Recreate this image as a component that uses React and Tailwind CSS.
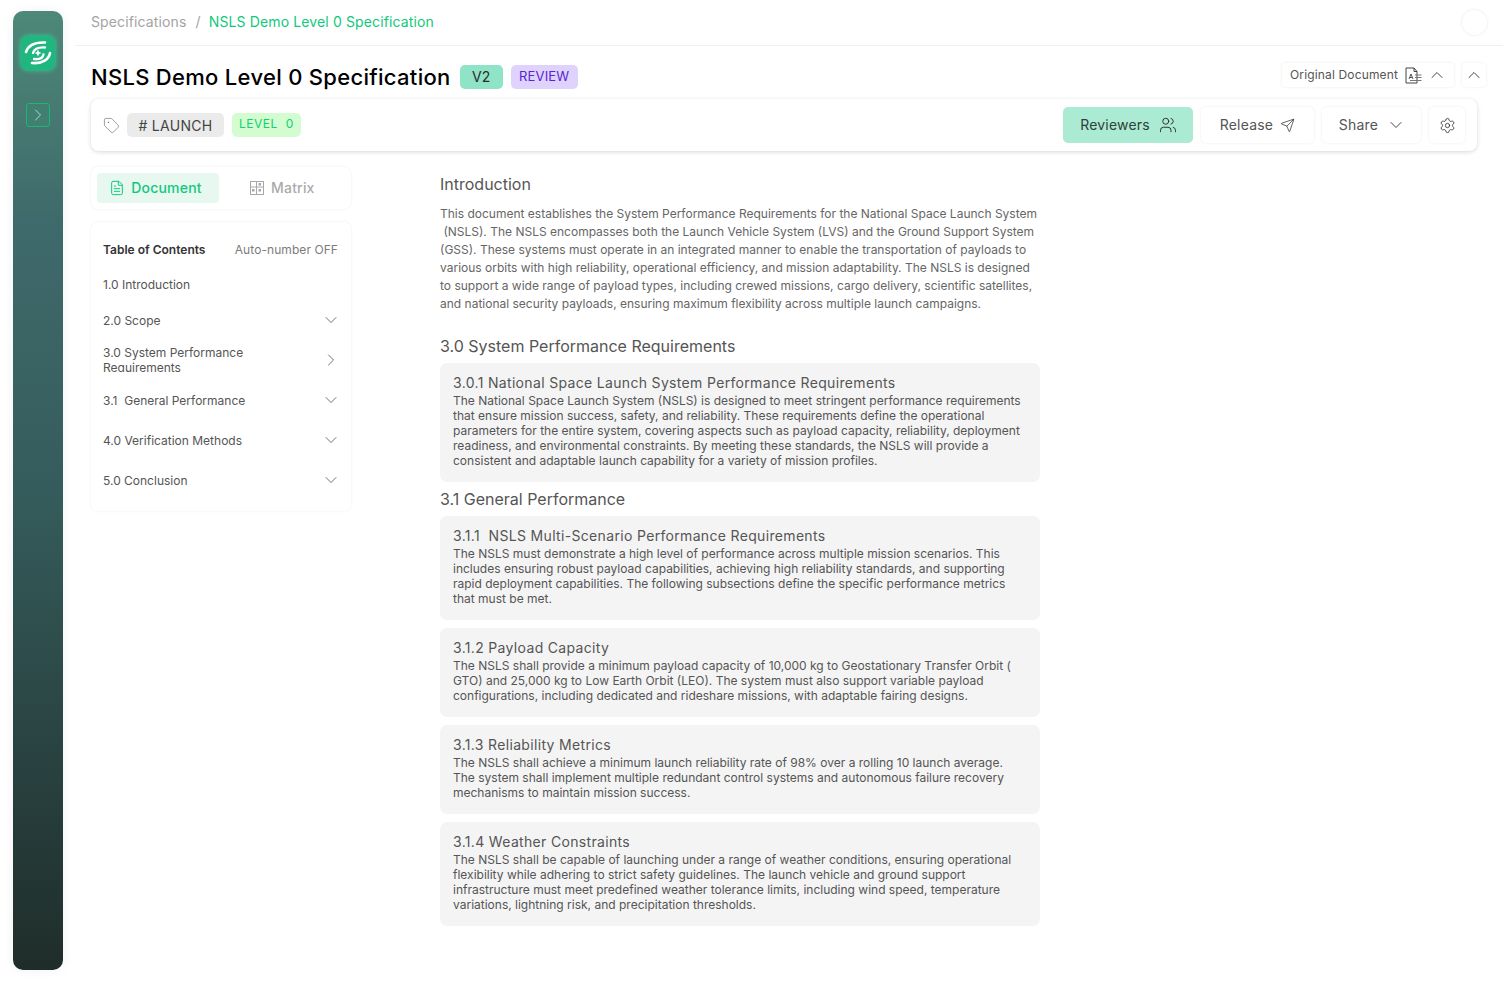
import { ChevronDown, ChevronRight, ChevronUp, Tag, Users, Send, Settings, FileText } from "lucide-react";

const tocItems = [
  { label: "2.0 Scope" },
  { label: "3.0 System Performance Requirements", open: true },
  { label: "3.1  General Performance" },
  { label: "4.0 Verification Methods" },
  { label: "5.0 Conclusion" },
];

const sections = [
  {
    title: "3.1.1  NSLS Multi-Scenario Performance Requirements",
    lines: [
      "The NSLS must demonstrate a high level of performance across multiple mission scenarios. This",
      "includes ensuring robust payload capabilities, achieving high reliability standards, and supporting",
      "rapid deployment capabilities. The following subsections define the specific performance metrics",
      "that must be met.",
    ],
  },
  {
    title: "3.1.2 Payload Capacity",
    lines: [
      "The NSLS shall provide a minimum payload capacity of 10,000 kg to Geostationary Transfer Orbit (",
      "GTO) and 25,000 kg to Low Earth Orbit (LEO). The system must also support variable payload",
      "configurations, including dedicated and rideshare missions, with adaptable fairing designs.",
    ],
  },
  {
    title: "3.1.3 Reliability Metrics",
    lines: [
      "The NSLS shall achieve a minimum launch reliability rate of 98% over a rolling 10 launch average.",
      "The system shall implement multiple redundant control systems and autonomous failure recovery",
      "mechanisms to maintain mission success.",
    ],
  },
  {
    title: "3.1.4 Weather Constraints",
    lines: [
      "The NSLS shall be capable of launching under a range of weather conditions, ensuring operational",
      "flexibility while adhering to strict safety guidelines. The launch vehicle and ground support",
      "infrastructure must meet predefined weather tolerance limits, including wind speed, temperature",
      "variations, lightning risk, and precipitation thresholds.",
    ],
  },
];

const introLines = [
  "This document establishes the System Performance Requirements for the National Space Launch System",
  "\u00a0(NSLS). The NSLS encompasses both the Launch Vehicle System (LVS) and the Ground Support System",
  "(GSS). These systems must operate in an integrated manner to enable the transportation of payloads to",
  "various orbits with high reliability, operational efficiency, and mission adaptability. The NSLS is designed",
  "to support a wide range of payload types, including crewed missions, cargo delivery, scientific satellites,",
  "and national security payloads, ensuring maximum flexibility across multiple launch campaigns.",
];

const Logo = () => (
  <svg width="28" height="28" viewBox="0 0 28 28" fill="none" stroke="white" strokeLinecap="round">
    <path d="M2 13C4 7 10 3 21 3.5" strokeWidth="2.6" />
    <path d="M9 14C10 10.5 14 8 21 8.5" strokeWidth="2.3" />
    <path d="M26 14C25 20 19 25 8 24" strokeWidth="2.6" />
    <path d="M19.5 15.5C19 19 15 20.5 10 20" strokeWidth="2.3" />
    <path d="M14 10.5L15.1 13L17.5 14L15.1 15L14 17.5L12.9 15L10.5 14L12.9 13Z" fill="white" stroke="none" />
  </svg>
);

const MatrixIcon = () => (
  <svg width="14" height="14" viewBox="0 0 14 14" fill="none" stroke="#a8a8a8" strokeWidth="1">
    <rect x="0.5" y="0.5" width="13" height="13" />
    <path d="M0.5 6H13.5M6.5 0.5V13.5" />
    <rect x="2.5" y="8.5" width="1.5" height="1.5" fill="#a8a8a8" />
    <rect x="9" y="8.5" width="1.5" height="1.5" fill="#a8a8a8" />
    <rect x="9" y="2.5" width="1.5" height="1.5" fill="#a8a8a8" />
  </svg>
);

const OriginalDocIcon = () => (
  <svg width="17" height="17" viewBox="0 0 17 17" fill="none" stroke="#444" strokeWidth="1">
    <path d="M1 1H9L12 4.5V16H1Z" />
    <path d="M9 1V4.5H12" />
    <path d="M4 12L6 7L8 12M4.8 10.5H7.2" strokeWidth="0.9" />
    <path d="M10 8H16.5M10 10.5H16.5M5 13.5H16.5" stroke="#777" />
  </svg>
);

export default function App() {
  return (
    <div className="flex min-h-[982px] bg-white font-['Inter',sans-serif] text-[#1a1a1a]">
      {/* Sidebar */}
      <aside className="mt-[11px] ml-[13px] flex h-[959px] w-[50px] shrink-0 flex-col items-center rounded-[10px] bg-[linear-gradient(180deg,#4d8878_0%,#3f6a6b_22%,#355c5c_50%,#1f2d2a_100%)] pt-[25px] shadow-[0_0_12px_rgba(0,0,0,0.06)]">
        <div className="flex h-[34px] w-[34px] items-center justify-center rounded-[7px] bg-[#1fb67f] shadow-[0_0_5px_#2fdc9a]">
          <Logo />
        </div>
        <div className="mt-[33px] flex h-[24px] w-[24px] items-center justify-center rounded-[3px] border border-[#18b878] bg-[#3f8070]">
          <ChevronRight size={20} strokeWidth={1.1} className="text-[#c5dcd6]" />
        </div>
      </aside>

      <main className="ml-[12px] w-[1428px]">
        {/* Breadcrumb */}
        <div className="flex h-[46px] items-center justify-between border-b border-[#f0f0f0] pr-[16px] pl-[16px]">
          <div className="flex items-center pb-[2px] text-[14px] tracking-[0.13px]">
            <span className="text-[#a3a3a3]">Specifications</span>
            <span className="mr-[8px] ml-[9px] text-[#a3a3a3]">/</span>
            <span className="text-[#10c97c]">NSLS Demo Level 0 Specification</span>
          </div>
          <div className="h-[25px] w-[25px] rounded-full bg-white shadow-[0_0_3px_rgba(0,0,0,0.1)]" />
        </div>

        {/* Title row */}
        <div className="flex h-[53px] items-center justify-between pt-[8px] pr-[17px] pl-[16px]">
          <div className="flex items-center">
            <h1 className="text-[22px] leading-[32px] font-medium tracking-[0.3px] text-black">NSLS Demo Level 0 Specification</h1>
            <span className="ml-[9px] flex h-[24px] w-[43px] items-center justify-center rounded-[5px] bg-[#8fe3c6] text-[14px] text-[#2b2b2b]">V2</span>
            <span className="ml-[8px] flex h-[24px] w-[67px] items-center justify-center rounded-[5px] bg-[#dfd3fd] text-[13px] tracking-[0.15px] text-[#5a25d0]">REVIEW</span>
          </div>
          <div className="mb-[3px] flex items-center gap-[8px]">
            <div className="flex h-[24px] w-[172px] items-center rounded-[4px] bg-white pl-[8px] shadow-[0_0_3px_rgba(0,0,0,0.09)]">
              <span className="text-[12px] tracking-[0.15px] text-[#555]">Original Document</span>
              <span className="ml-[7px]"><OriginalDocIcon /></span>
              <ChevronUp size={20} strokeWidth={1.2} className="ml-[5px] text-[#444]" />
            </div>
            <div className="flex h-[24px] w-[24px] items-center justify-center rounded-[4px] bg-white shadow-[0_0_3px_rgba(0,0,0,0.08)]">
              <ChevronUp size={20} strokeWidth={1.2} className="text-[#444]" />
            </div>
          </div>
        </div>

        {/* Tag bar */}
        <div className="mr-[26px] ml-[16px] flex h-[52px] items-center justify-between rounded-[8px] bg-white pr-[12px] pl-[12px] shadow-[0_1px_4px_rgba(0,0,0,0.16)]">
          <div className="flex items-center">
            <Tag size={17} strokeWidth={1} className="text-[#777]" />
            <span className="ml-[7px] flex h-[24px] w-[97px] items-center justify-center rounded-[5px] bg-[#ebebeb] text-[14px] tracking-[0.3px] text-[#444]"># LAUNCH</span>
            <span className="ml-[8px] flex h-[24px] w-[69px] items-center justify-center gap-[8px] rounded-[5px] bg-[#d3fdd0] pb-[2px] text-[12px] tracking-[0.5px] text-[#14cf74]">LEVEL <span>0</span></span>
          </div>
          <div className="flex items-center gap-[8px]">
            <button className="flex h-[36px] w-[130px] items-center justify-center gap-[9px] rounded-[5px] bg-[#abebd4] pb-[1px] pl-[1px] text-[14px] tracking-[0.2px] text-[#2f3f3a]">
              Reviewers <Users size={18} strokeWidth={1.2} className="text-[#222]" />
            </button>
            <button className="flex h-[36px] w-[113px] items-center justify-center gap-[7px] rounded-[5px] bg-white pb-[2px] text-[14px] tracking-[0.2px] text-[#555] shadow-[0_0_3px_rgba(0,0,0,0.08)]">
              Release <Send size={15} strokeWidth={1.2} className="mt-[2px] text-[#333]" />
            </button>
            <button className="flex h-[36px] w-[99px] items-center justify-center gap-[8px] rounded-[5px] bg-white pb-[2px] pl-[2px] text-[14px] tracking-[0.2px] text-[#555] shadow-[0_0_3px_rgba(0,0,0,0.08)]">
              Share <ChevronDown size={20} strokeWidth={1.1} className="mt-[2px] text-[#333]" />
            </button>
            <button className="flex h-[36px] w-[36px] items-center justify-center rounded-[5px] bg-white text-[#333] shadow-[0_0_3px_rgba(0,0,0,0.08)]">
              <Settings size={17} strokeWidth={1.2} />
            </button>
          </div>
        </div>

        <div className="mt-[16px] flex pl-[16px]">
          {/* Left column */}
          <div className="w-[260px] shrink-0">
            <div className="flex h-[42px] items-center rounded-[7px] bg-white pl-[6px] shadow-[0_0_3px_rgba(0,0,0,0.07)]">
              <div className="flex h-[30px] w-[122px] items-center justify-center gap-[6px] rounded-[4px] bg-[#e6f8ef] pr-[5px] pb-[1px] text-[14px] tracking-[0.2px] font-medium text-[#14c77f]">
                <FileText size={16} strokeWidth={1.5} /> Document
              </div>
              <div className="ml-[31px] flex items-center gap-[7px] pb-[1px] text-[14px] tracking-[0.2px] font-medium text-[#ababab]">
                <MatrixIcon /> Matrix
              </div>
            </div>

            <div className="mt-[13px] h-[289px] rounded-[7px] bg-white px-[12px] pt-[20px] shadow-[0_0_3px_rgba(0,0,0,0.07)]">
              <div className="flex h-[16px] items-center justify-between pr-[1px] text-[12px] leading-[16px]">
                <span className="font-semibold text-[#333]">Table of Contents</span>
                <span className="tracking-[0.07px] text-[#7c7c7c]">Auto-number OFF</span>
              </div>
              <div className="mt-[19px] h-[16px] text-[12px] leading-[16px] text-[#555]">1.0 Introduction</div>
              <div className="mt-[7px]">
                {tocItems.map((item) => (
                  <div key={item.label} className="flex h-[40px] items-center justify-between text-[12px] leading-[15px] whitespace-pre-wrap text-[#555]">
                    {item.open ? (
                      <span className="max-h-[27px] w-[170px] -translate-y-[2px] overflow-hidden">{item.label}</span>
                    ) : (
                      <span className="w-[170px]">{item.label}</span>
                    )}
                    {item.open ? (
                      <ChevronRight size={20} strokeWidth={1} className="-mr-[2px] text-[#555]" />
                    ) : (
                      <ChevronDown size={20} strokeWidth={1} className="-mr-[2px] text-[#555]" />
                    )}
                  </div>
                ))}
              </div>
            </div>
          </div>

          {/* Document body */}
          <div className="ml-[89px] w-[600px] pt-[7px]">
            <h2 className="text-[16px] leading-[20px] text-[#555]">Introduction</h2>
            <div className="mt-[11px] text-[12px] leading-[18px] whitespace-nowrap text-[#666]">
              {introLines.map((line) => (
                <div key={line}>{line}</div>
              ))}
            </div>

            <h2 className="mt-[23px] text-[16px] leading-[20px] text-[#555]">3.0 System Performance Requirements</h2>
            <div className="mt-[7px] h-[119px] rounded-[7px] bg-[#f4f4f4] px-[13px] pt-[12px]">
              <h3 className="text-[14px] leading-[16px] tracking-[0.33px] text-[#555]">3.0.1 National Space Launch System Performance Requirements</h3>
              <div className="mt-[2px] text-[12px] leading-[15px] whitespace-nowrap text-[#555]">
                <div>The National Space Launch System (NSLS) is designed to meet stringent performance requirements</div>
                <div>that ensure mission success, safety, and reliability. These requirements define the operational</div>
                <div>parameters for the entire system, covering aspects such as payload capacity, reliability, deployment</div>
                <div>readiness, and environmental constraints. By meeting these standards, the NSLS will provide a</div>
                <div>consistent and adaptable launch capability for a variety of mission profiles.</div>
              </div>
            </div>

            <h2 className="mt-[7px] text-[16px] leading-[20px] text-[#555]">3.1 General Performance</h2>
            <div className="mt-[7px] flex flex-col gap-[8px]">
              {sections.map((section) => (
                <div key={section.title} className="rounded-[7px] bg-[#f4f4f4] px-[13px] pt-[12px] pb-[14px]">
                  <h3 className="text-[14px] leading-[16px] tracking-[0.33px] whitespace-pre-wrap text-[#555]">{section.title}</h3>
                  <div className="mt-[2px] text-[12px] leading-[15px] whitespace-nowrap text-[#555]">
                    {section.lines.map((line) => (
                      <div key={line}>{line}</div>
                    ))}
                  </div>
                </div>
              ))}
            </div>
          </div>
        </div>
      </main>
    </div>
  );
}
